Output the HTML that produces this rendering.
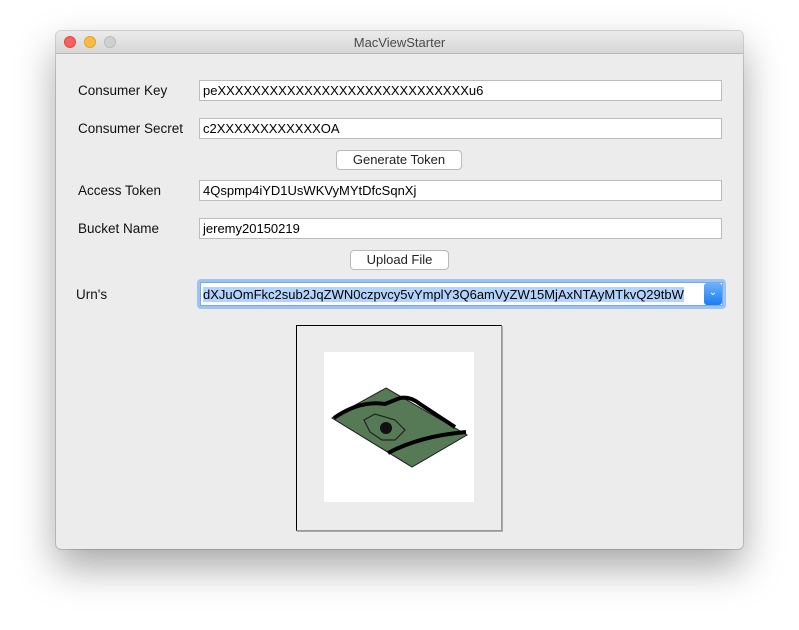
<!DOCTYPE html>
<html><head><style>
body{margin:0;width:799px;height:630px;background:#fff;position:relative;overflow:hidden;font-family:"Liberation Sans",sans-serif;}
.win{position:absolute;left:56px;top:31px;width:687px;height:518px;background:#ececec;border-radius:5px;box-shadow:0 18px 40px rgba(0,0,0,0.35),0 0 0 1px rgba(0,0,0,0.15);overflow:hidden;}
.tb{position:absolute;left:0;top:0;width:100%;height:22px;background:linear-gradient(#ebebeb,#d6d6d6);border-bottom:1px solid #b8b8b8;text-align:center;font-size:13px;line-height:23px;color:#4a4a4a;}
.dot{position:absolute;top:5px;width:12px;height:12px;border-radius:50%;}
.lbl{position:absolute;font-size:13.5px;color:#111;}
.fld{position:absolute;height:21px;background:#fff;border:1px solid #bcbcbc;box-sizing:border-box;font-size:13px;line-height:20px;padding-left:3px;color:#000;white-space:nowrap;overflow:hidden;}
.btn{position:absolute;height:20px;background:#fff;border:1px solid #b9b9b9;border-radius:4px;box-sizing:border-box;font-size:13px;line-height:18px;text-align:center;color:#222;}
</style></head><body>
<div class="win">
<div class="tb">MacViewStarter
<div class="dot" style="left:8px;background:#fc605c;border:1px solid #de4a43;box-sizing:border-box"></div>
<div class="dot" style="left:28px;background:#fdbc40;border:1px solid #dea236;box-sizing:border-box"></div>
<div class="dot" style="left:48px;background:#d0d0d0;border:1px solid #bbb;box-sizing:border-box"></div>
</div>
<div class="lbl" style="left:22px;top:52px">Consumer Key</div>
<div class="fld" style="left:143px;top:49px;width:523px">peXXXXXXXXXXXXXXXXXXXXXXXXXXXXXu6</div>
<div class="lbl" style="left:22px;top:90px">Consumer Secret</div>
<div class="fld" style="left:143px;top:87px;width:523px">c2XXXXXXXXXXXXOA</div>
<div class="btn" style="left:280px;top:119px;width:126px">Generate Token</div>
<div class="lbl" style="left:22px;top:152px">Access Token</div>
<div class="fld" style="left:143px;top:149px;width:523px">4Qspmp4iYD1UsWKVyMYtDfcSqnXj</div>
<div class="lbl" style="left:22px;top:190px">Bucket Name</div>
<div class="fld" style="left:143px;top:187px;width:523px">jeremy20150219</div>
<div class="btn" style="left:294px;top:219px;width:99px">Upload File</div>
<div class="lbl" style="left:20px;top:256px">Urn's</div>
<div style="position:absolute;left:141px;top:248px;width:529px;height:30px;background:#9cc3f2;border-radius:4px"></div>
<div class="fld" style="left:144px;top:251px;width:523px;height:24px;line-height:23px;border-color:#7aa8e0;padding-left:2px"><span style="background:#b3d3fb">dXJuOmFkc2sub2JqZWN0czpvcy5vYmplY3Q6amVyZW15MjAxNTAyMTkvQ29tbW</span></div>
<div style="position:absolute;left:648px;top:252px;width:18px;height:22px;background:linear-gradient(#6cb1fb,#1a7cf6);border-radius:3px;color:#fff;font-size:10px;text-align:center;line-height:20px">&#8964;</div>
<div style="position:absolute;left:240px;top:294px;width:204px;height:204px;border:1px solid #000;border-right-color:#999;border-bottom-color:#999;box-shadow:1px 1px 0 #aaa"></div>
<div style="position:absolute;left:268px;top:321px;width:150px;height:150px;background:#fff">
<svg width="150" height="150" viewBox="324 352 150 150">
<polygon points="386,388 332,418 412,467 467,435" fill="#567a55" stroke="#1a1a1a" stroke-width="1"/>
<path d="M334,418 Q360,400 385,404 L400,398 Q410,396 420,404 L455,427" fill="none" stroke="#000" stroke-width="4"/>
<path d="M388,453 Q420,436 466,432" fill="none" stroke="#000" stroke-width="4"/>
<path d="M364,420 L375,414 L395,420 L405,430 L395,440 L382,440 L370,432 Z" fill="none" stroke="#222" stroke-width="1.2"/>
<circle cx="386" cy="428" r="6" fill="#111"/>
</svg></div>
</div>
</body></html>
